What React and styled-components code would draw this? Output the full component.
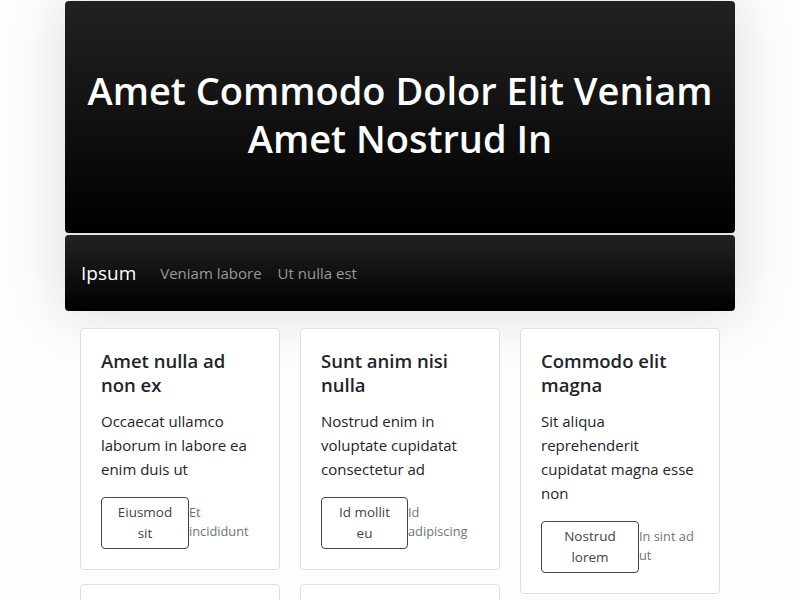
import React from 'react';
import styled, { createGlobalStyle } from 'styled-components';

const GlobalStyle = createGlobalStyle`
  html, body {
    margin: 0;
    padding: 0;
    background: #fdfdfd;
  }
  body {
    font-family: "Open Sans", "Noto Sans", sans-serif;
    color: #212529;
  }
  * { box-sizing: border-box; }
`;

const Page = styled.div`
  width: 670px;
  margin: 0 auto;
  padding-top: 1px;
`;

const Top = styled.div`
  display: flex;
  flex-direction: column;
  gap: 2px;
  background: #e4e4e4;
  border-radius: 4px;
  box-shadow: 0 0 60px rgba(0, 0, 0, 0.14);
`;

const Hero = styled.header`
  height: 232px;
  display: flex;
  align-items: center;
  justify-content: center;
  padding: 0 20px 6px;
  border-radius: 4px;
  background: linear-gradient(#222222, #000000);
`;

const HeroTitle = styled.h1`
  margin: 0;
  color: #fff;
  font-size: 38px;
  font-weight: 600;
  line-height: 48px;
  text-align: center;
`;

const Nav = styled.nav`
  height: 76px;
  display: flex;
  align-items: center;
  padding: 0 16px;
  border-radius: 4px;
  background: linear-gradient(#222222, #000000);
`;

const Brand = styled.span`
  color: #fff;
  font-size: 19px;
  margin-right: 24px;
`;

const NavLink = styled.a`
  color: #999;
  font-size: 15px;
  margin-right: 16px;
`;

const Columns = styled.div`
  display: flex;
  gap: 20px;
  padding: 17px 15px 0;
  align-items: flex-start;
`;

const Column = styled.div`
  width: 200px;
  display: flex;
  flex-direction: column;
  gap: 14px;
`;

const Card = styled.div`
  background: #fff;
  border: 1px solid #dfdfdf;
  border-radius: 4px;
  padding: 20px;
  min-height: ${(p) => p.minH || 0}px;
`;

const CardTitle = styled.h2`
  margin: 0 0 12px;
  font-size: 18.5px;
  font-weight: 600;
  line-height: 24px;
`;

const CardText = styled.p`
  margin: 0 0 16px;
  font-size: 15px;
  line-height: 24px;
`;

const Actions = styled.div`
  display: flex;
  align-items: flex-start;
`;

const Button = styled.button`
  flex: 0 0 ${(p) => p.w}px;
  padding: 4px 12px;
  border: 1px solid #444;
  border-radius: 4px;
  background: #fff;
  color: #444;
  font-family: inherit;
  font-size: 13.5px;
  line-height: 21px;
`;

const Small = styled.small`
  min-width: 0;
  color: #6c757d;
  font-size: 12.8px;
  line-height: 19px;
  padding-top: 6px;
`;

const columns = [
  [
    { title: 'Amet nulla ad non ex', text: 'Occaecat ullamco laborum in labore ea enim duis ut', btn: 'Eiusmod sit', w: 88, note: 'Et incididunt' },
    { minH: 60 },
  ],
  [
    { title: 'Sunt anim nisi nulla', text: 'Nostrud enim in voluptate cupidatat consectetur ad', btn: 'Id mollit eu', w: 87, note: 'Id adipiscing' },
    { minH: 60 },
  ],
  [
    { title: 'Commodo elit magna', text: 'Sit aliqua reprehenderit cupidatat magna esse non', btn: 'Nostrud lorem', w: 98, note: 'In sint ad ut' },
  ],
];

export default function App() {
  return (
    <>
      <GlobalStyle />
      <Page>
        <Top>
          <Hero>
            <HeroTitle>Amet Commodo Dolor Elit Veniam Amet Nostrud In</HeroTitle>
          </Hero>
          <Nav>
            <Brand>Ipsum</Brand>
            <NavLink>Veniam labore</NavLink>
            <NavLink>Ut nulla est</NavLink>
          </Nav>
        </Top>
        <Columns>
          {columns.map((col, i) => (
            <Column key={i}>
              {col.map((c, j) =>
                c.title ? (
                  <Card key={j}>
                    <CardTitle>{c.title}</CardTitle>
                    <CardText>{c.text}</CardText>
                    <Actions>
                      <Button w={c.w}>{c.btn}</Button>
                      <Small>{c.note}</Small>
                    </Actions>
                  </Card>
                ) : (
                  <Card key={j} minH={c.minH} />
                )
              )}
            </Column>
          ))}
        </Columns>
      </Page>
    </>
  );
}
